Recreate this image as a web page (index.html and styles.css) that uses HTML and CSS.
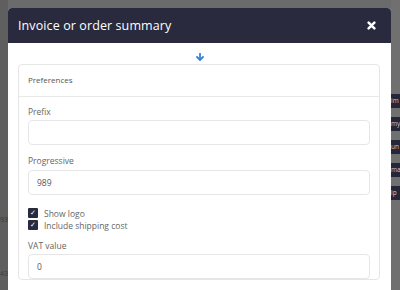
FILE: index.html
```html
<!DOCTYPE html>
<html lang="en">
<head>
  <meta charset="UTF-8">
  <meta name="viewport" content="width=device-width, initial-scale=1.0">
  <title>Invoice or order summary</title>
  <link rel="stylesheet" href="styles.css">
</head>
<body>
  <!-- dimmed page behind the modal -->
  <div class="page">
    <div class="page-left">
      <span class="num num-a">93</span>
      <span class="num num-b">43</span>
    </div>
    <div class="page-right">
      <span class="side-btn">im</span>
      <span class="side-btn">my</span>
      <span class="side-btn">un</span>
      <span class="side-btn">ma</span>
      <span class="side-btn">ip</span>
    </div>
  </div>

  <div class="modal">
    <div class="modal-header">
      <h1 class="modal-title">Invoice or order summary</h1>
      <button class="close" aria-label="Close">
        <svg width="9" height="9" viewBox="0 0 10 10">
          <path d="M1.8 1.8 L8.2 8.2 M8.2 1.8 L1.8 8.2" stroke="#fff" stroke-width="2.8" stroke-linecap="round"/>
        </svg>
      </button>
    </div>

    <div class="modal-body">
      <div class="arrow">
        <svg width="8" height="8" viewBox="0 0 8 8">
          <path d="M4 0.5 V6.5 M1 4 L4 7 L7 4" stroke="#3b82d6" stroke-width="1.8" fill="none" stroke-linecap="round" stroke-linejoin="round"/>
        </svg>
      </div>

      <div class="card">
        <div class="card-header">Preferences</div>
        <div class="card-body">
          <div class="field">
            <label class="label">Prefix</label>
            <input class="input" type="text" value="">
          </div>
          <div class="field">
            <label class="label">Progressive</label>
            <input class="input" type="text" value="989">
          </div>
          <div class="checks">
            <label class="check"><span class="box">&#10003;</span>Show logo</label>
            <label class="check"><span class="box">&#10003;</span>Include shipping cost</label>
          </div>
          <div class="field field-vat">
            <label class="label">VAT value</label>
            <input class="input" type="text" value="0">
          </div>
        </div>
      </div>
    </div>
  </div>
</body>
</html>
```

FILE: styles.css
```css
* {
  box-sizing: border-box;
}

body {
  margin: 0;
  width: 400px;
  height: 290px;
  overflow: hidden;
  background-color: #6b6b6b;
  font-family: 'Open Sans', 'DejaVu Sans', sans-serif;
  position: relative;
}

/* page behind the overlay */
.page {
  display: flex;
  justify-content: space-between;
  height: 290px;
}

.page-left {
  width: 8px;
  position: relative;
  background-color: #5f5f5f;
}

.num {
  position: absolute;
  left: 0;
  font-size: 7px;
  color: #3a3a3a;
}

.num-a {
  top: 215px;
}

.num-b {
  top: 269px;
}

.page-right {
  width: 9px;
  padding-top: 94px;
  display: flex;
  flex-direction: column;
  gap: 9px;
  background-color: #707070;
}

.side-btn {
  display: block;
  height: 14px;
  line-height: 14px;
  background-color: #26263a;
  color: #c8c8d0;
  font-size: 6.5px;
  white-space: nowrap;
  overflow: hidden;
}

/* modal */
.modal {
  position: absolute;
  top: 8px;
  left: 8px;
  width: 383px;
  height: 290px;
  background-color: #fff;
  border-radius: 4px 4px 0 0;
  overflow: hidden;
}

.modal-header {
  height: 35px;
  background-color: #292a3e;
  display: flex;
  align-items: center;
  justify-content: space-between;
  padding: 0 10px;
}

.modal-title {
  margin: 0;
  color: #fff;
  font-size: 12.5px;
  font-weight: 400;
  letter-spacing: 0.1px;
}

.close {
  background: none;
  border: none;
  padding: 0;
  width: 9px;
  height: 9px;
  display: flex;
  margin-right: 5px;
}

.modal-body {
  padding: 0 11px 0 10px;
}

.arrow {
  height: 21px;
  display: flex;
  justify-content: center;
  align-items: center;
  padding-top: 7px;
  margin-left: 1px;
}

.card {
  border: 1px solid #e6e6e6;
  border-radius: 4px;
}

.card-header {
  height: 32px;
  line-height: 30px;
  padding: 0 9px;
  border-bottom: 1px solid #e8e8e8;
  font-size: 8px;
  color: #555;
}

.card-body {
  padding: 9px 9px 0 9px;
}

.field {
  display: flex;
  flex-direction: column;
  gap: 2px;
}

.field + .field {
  margin-top: 10px;
}

.field-vat {
  margin-top: 9px;
}

.label {
  font-size: 8.5px;
  line-height: 12px;
  color: #666;
}

.input {
  height: 25px;
  border: 1px solid #e6e6e6;
  border-radius: 4px;
  padding: 0 8px;
  font-family: inherit;
  font-size: 8.5px;
  color: #555;
  outline: none;
}

.field + .field .input {
  margin-top: 1px;
}

.checks {
  margin-top: 12px;
  display: flex;
  flex-direction: column;
}

.check {
  display: flex;
  align-items: center;
  height: 12px;
  gap: 6px;
  font-size: 8.5px;
  color: #666;
}

.box {
  width: 10px;
  height: 10px;
  background-color: #2a2a3e;
  color: #fff;
  font-size: 7px;
  line-height: 10px;
  text-align: center;
  border-radius: 1px;
}
```
